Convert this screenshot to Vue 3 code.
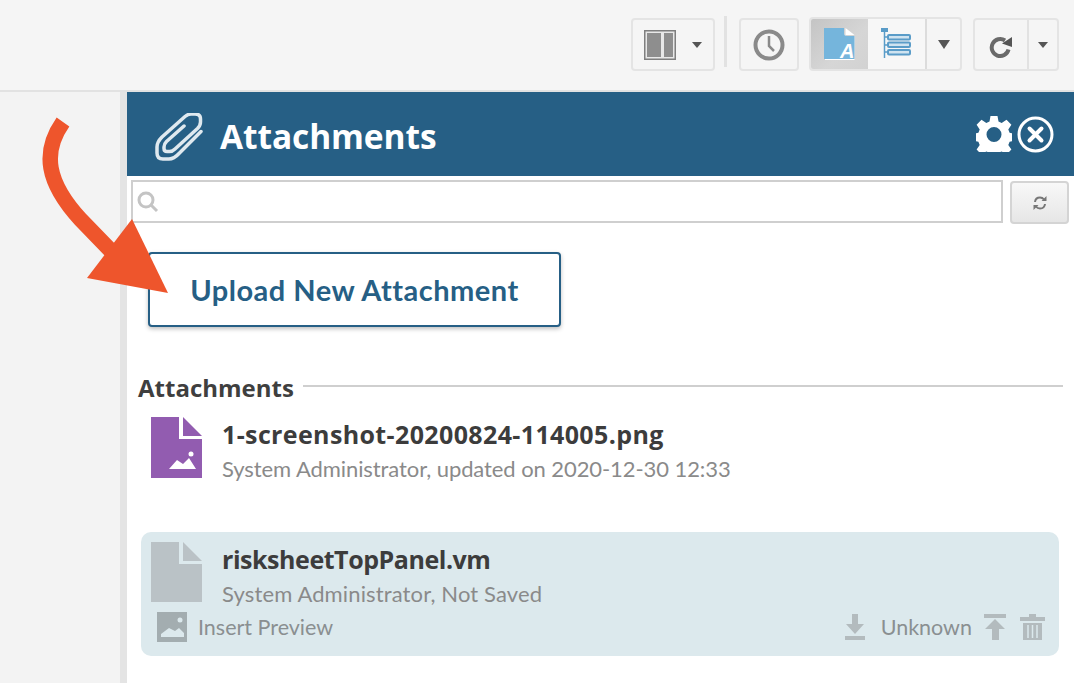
<script setup>
</script>

<template>
  <div class="page">
    <header class="topbar">
      <div class="tgroup g-layout">
        <button class="tbtn b-layout">
          <svg width="32" height="30" viewBox="0 0 32 30"><rect width="32" height="30" fill="#7f7f7f"/><rect x="1.500" y="1.500" width="29" height="27" fill="#e8e8e8"/><path d="M3 3h14v24H3zM20 3h9v24h-9z" fill="#8e8e8e"/></svg>
          <i class="caret"></i>
        </button>
      </div>
      <div class="sep"></div>
      <div class="tgroup g-clock">
        <button class="tbtn b-clock">
          <svg width="32" height="32" viewBox="0 0 32 32"><circle cx="16" cy="16" r="13.500" fill="none" stroke="#8a8a8a" stroke-width="4"/><path d="M16 7v10l5 5" fill="none" stroke="#8a8a8a" stroke-width="2.500"/></svg>
        </button>
      </div>
      <div class="tgroup g-view">
        <button class="tbtn b-active">
          <svg width="31" height="32" viewBox="0 0 31 32"><path d="M0 0h20v5q0 3 3 3h7.500v24H1z" fill="#fff"/><path d="M0 0h20v5q0 3 3 3h7.500v23H0z" fill="#75b5dc"/><path d="M21.500 0l9 7h-9z" fill="#fff"/><text x="16" y="30" class="a-letter">A</text></svg>
        </button>
        <button class="tbtn b-tree">
          <svg width="31" height="32" viewBox="0 0 31 32"><path d="M3.500 2v28M3.500 9h4M3.500 17h4M3.500 24h4" stroke="#5a9cc8" stroke-width="1.500" fill="none"/><rect x="0" y="0" width="7" height="4" fill="#5a9cc8"/><g fill="#cfe3f0" stroke="#5a9cc8" stroke-width="2"><rect x="7" y="7" width="22" height="4.500" rx="1"/><rect x="7" y="14.500" width="22" height="4.500" rx="1"/><rect x="7" y="22" width="22" height="4.500" rx="1"/></g></svg>
        </button>
        <button class="tbtn b-drop"><i class="caret big"></i></button>
      </div>
      <div class="tgroup g-refresh">
        <button class="tbtn b-refresh">
          <svg class="ricon" width="24" height="24" viewBox="0 0 24 24"><path d="M19.500 14.500A8.500 8.500 0 1 1 16 5.500" fill="none" stroke="#6a6a6a" stroke-width="4"/><path d="M13 8.500L23 2v10z" fill="#555"/></svg>
        </button>
        <button class="tbtn b-rdrop"><i class="caret"></i></button>
      </div>
    </header>

    <div class="body">
      <aside class="side"></aside>
      <div class="split"></div>
      <main class="panel">
        <div class="phead">
          <svg class="clip" width="48" height="50" viewBox="0 0 48 50"><path d="M46 18.500L24 40.500Q19 46 14 46H8Q2 46 2 40V34Q2 29 7 24L30 3.500Q33 1 36 1h4q5.500 0 5.500 5v3q0 3.500-3 6.500L20 36q-2.500 2.500-5.500 2.500H12q-3 0-3-3v-1.500q0-3 2.500-5.500L29 13" fill="none" stroke="#dfe9ef" stroke-width="3.500" stroke-linecap="round" stroke-linejoin="round"/></svg>
          <h1>Attachments</h1>
          <div class="hicons">
            <svg width="36" height="36" viewBox="0 0 36 36"><path fill="#fff" fill-rule="evenodd" d="M14.500 0h7l1 5.500 3.200 1.400 4.800-3.100 4.900 5-3.100 4.600 1.300 3.300 5.400 1v7l-5.400 1-1.300 3.200 3.100 4.700-4.900 4.900-4.800-3.100-3.200 1.300-1 5.400h-7l-1-5.400-3.200-1.300-4.800 3.100-4.900-4.900 3.100-4.700-1.300-3.200-5.400-1v-7l5.400-1 1.300-3.300-3.100-4.600 4.900-5 4.800 3.100 3.200-1.400zM18 11a7.500 7.500 0 1 0 0 15 7.500 7.500 0 0 0 0-15z"/></svg>
            <svg width="37" height="37" viewBox="0 0 37 37"><circle cx="18.500" cy="18.500" r="16.500" fill="none" stroke="#fff" stroke-width="3"/><path d="M12.500 12.500l12 12M24.500 12.500l-12 12" stroke="#fff" stroke-width="4" stroke-linecap="round"/></svg>
          </div>
        </div>

        <div class="search-row">
          <div class="search">
            <svg width="24" height="24" viewBox="0 0 24 24"><circle cx="10" cy="10" r="7" fill="none" stroke="#c4c4c4" stroke-width="3"/><path d="M15 15l6 6" stroke="#c4c4c4" stroke-width="3"/></svg>
          </div>
          <button class="refresh">
            <svg width="16" height="16" viewBox="0 0 16 16"><path d="M3 7Q3.500 2.500 8 2.500q2.500 0 4 2M13 9q-.5 4.500-5 4.500-2.500 0-4-2" fill="none" stroke="#777" stroke-width="2"/><path d="M9.500 6h5V1zM6.500 10h-5v5z" fill="#777"/></svg>
          </button>
        </div>

        <button class="upload">Upload New Attachment</button>

        <div class="section">
          <span>Attachments</span>
          <div class="rule"></div>
        </div>

        <div class="file">
          <svg class="doc" width="51" height="61" viewBox="0 0 51 61"><path d="M0 0h28v22h23v39H0z" fill="#925cb0"/><path d="M32 0l19 19H32z" fill="#925cb0"/><circle cx="40" cy="37" r="2.500" fill="#fff"/><path d="M18 52l8-9 6 4 6-6 7 11z" fill="#fff"/></svg>
          <div class="ftext">
            <div class="fname wide">1-screenshot-20200824-114005.png</div>
            <div class="fmeta">System Administrator, updated on 2020-12-30 12:33</div>
          </div>
        </div>

        <div class="card">
          <div class="card-top">
            <svg class="doc" width="51" height="60" viewBox="0 0 51 60"><path d="M0 0h28v22h23v38H0z" fill="#bac2c6"/><path d="M32 0l19 19H32z" fill="#bac2c6"/></svg>
            <div class="ftext">
              <div class="fname tight">risksheetTopPanel.vm</div>
              <div class="fmeta loose">System Administrator, Not Saved</div>
            </div>
          </div>
          <div class="card-bot">
            <svg class="pic" width="30" height="30" viewBox="0 0 30 30"><rect width="30" height="30" fill="#a3adb0"/><circle cx="23" cy="8" r="2.500" fill="#dce9ed"/><path d="M4 25v-3l8-6 6 3 4-3 5 5v4z" fill="#dce9ed"/></svg>
            <span class="ins">Insert Preview</span>
            <span class="grow"></span>
            <svg width="22" height="26" viewBox="0 0 22 26"><path d="M8 0h6v10h6L11 20 2 10h6zM1 22h20v4H1z" fill="#b3bbbe"/></svg>
            <span class="unk">Unknown</span>
            <svg width="22" height="26" viewBox="0 0 22 26"><path d="M0 0h22v4H0zM11 5l10 10h-6v11H8V15H1z" fill="#b3bbbe"/></svg>
            <svg class="trash" width="25" height="26" viewBox="0 0 25 26"><path d="M9 0h7v3h9v4H0V3h9zM3 9h19v17H3z" fill="#b3bbbe"/><path d="M8 11v13M12.500 11v13M17 11v13" stroke="#dce9ed" stroke-width="1.500"/></svg>
          </div>
        </div>
      </main>
    </div>

    <svg class="arrow" width="200" height="320" viewBox="0 0 200 320">
      <path d="M63 122C42 152 46 182 81 220L112 252" fill="none" stroke="#ee552c" stroke-width="15.500"/>
      <path d="M132 219L87 278 168 293z" fill="#ee552c"/>
    </svg>
  </div>
</template>

<style>
html, body { margin: 0; padding: 0; background: #fff; }
</style>

<style scoped>
.page {
  position: relative;
  width: 1074px;
  height: 683px;
  overflow: hidden;
  font-family: "Lato", "Open Sans", sans-serif;
  background: #f4f4f4;
}
button { padding: 0; font: inherit; background: none; }
.topbar {
  height: 92px;
  box-sizing: border-box;
  background: #f5f5f5;
  border-bottom: 2px solid #e2e2e2;
  display: flex;
  align-items: flex-start;
  justify-content: flex-end;
  padding: 17px 15px 0 0;
}
.tgroup {
  display: flex;
  height: 54px;
  box-sizing: border-box;
  border: 2px solid #e4e4e4;
  border-radius: 4px;
  background: #f5f5f5;
  overflow: hidden;
}
.tbtn {
  border: 0;
  display: flex;
  align-items: center;
  justify-content: center;
  height: 100%;
}
.caret {
  display: block;
  width: 0;
  height: 0;
  border: 5px solid transparent;
  border-top: 6px solid #555;
  border-bottom: 0;
}
.caret.big { border-width: 6px; border-top-width: 9px; border-bottom-width: 0; }
.g-layout { width: 84px; margin-right: 9px; margin-top: 1px; height: 53px; }
.b-layout { width: 100%; gap: 16px; padding-right: 1px; }
.sep { width: 3px; height: 51px; background: #e2e2e2; margin-right: 12px; margin-top: -1px; }
.g-clock { width: 60px; margin-right: 10px; margin-top: 1px; height: 53px; }
.b-clock { width: 100%; }
.g-view { width: 153px; margin-right: 11px; }
.b-active { width: 57px; background: linear-gradient(135deg, #c4c4c4, #d6d6d6 60%, #d2d2d2); }
.b-tree { width: 57px; background: #f7f7f7; border-right: 2px solid #dcdcdc; box-sizing: content-box; }
.b-drop { flex: 1; }
.a-letter { font: italic 700 20px "Liberation Sans", sans-serif; fill: #fff; }
.g-refresh { width: 86px; margin-top: 1px; height: 53px; }
.b-refresh { width: 54px; border-right: 2px solid #e2e2e2; }
.ricon { margin-top: 4px; }
.b-rdrop { flex: 1; }

.body { display: flex; height: 591px; }
.side { width: 120px; background: #f3f3f3; }
.split { width: 7px; background: #e4e4e4; }
.panel {
  flex: 1;
  background: #fff;
  min-width: 0;
  display: flex;
  flex-direction: column;
  align-items: flex-start;
}
.phead {
  align-self: stretch;
  height: 84px;
  flex: none;
  background: #265f85;
  display: flex;
  align-items: center;
  padding: 0 20px 0 28px;
  color: #fff;
}
.clip { margin: 8px 17px 0 0; }
.phead h1 {
  margin: 0;
  padding-top: 4px;
  font: 700 33.500px "Open Sans", sans-serif;
  letter-spacing: -0.1px;
}
.hicons { margin-left: auto; display: flex; gap: 5px; align-items: center; }
.search-row {
  align-self: stretch;
  display: flex;
  gap: 7px;
  padding: 4px 5px 0 4px;
}
.search {
  flex: 1;
  height: 43px;
  box-sizing: border-box;
  border: 2px solid #cfcfcf;
  display: flex;
  align-items: center;
  padding-left: 3px;
}
.refresh {
  width: 59px;
  height: 43px;
  margin-top: 1px;
  box-sizing: border-box;
  border: 2px solid #d4d4d4;
  border-radius: 4px;
  background: linear-gradient(#f8f8f8, #e6e6e6);
  display: flex;
  align-items: center;
  justify-content: center;
}
.upload {
  margin: 28px 0 0 21px;
  width: 413px;
  height: 75px;
  box-sizing: border-box;
  background: #fff;
  border: 2px solid #265f85;
  border-radius: 4px;
  box-shadow: 0 2px 4px rgba(0,0,0,.25);
  color: #265f85;
  font-weight: 700;
  font-size: 29px;
  letter-spacing: 0.5px;
}
.section {
  align-self: stretch;
  margin: 44px 11px 0 11px;
  display: flex;
  align-items: center;
  gap: 9px;
  color: #3f3f3f;
  font: 700 24px "Open Sans", sans-serif;
  height: 32px;
}
.rule { flex: 1; height: 2px; background: #cfcfcf; margin-top: -2px; }
.file { display: flex; margin: 14px 0 0 24px; gap: 20px; height: 61px; }
.ftext { display: flex; flex-direction: column; }
.fname {
  font: 700 25px/30px "Open Sans", sans-serif;
  color: #3c3c3c;
  margin-top: 2px;
}
.fname.wide { letter-spacing: 0.37px; }
.fname.tight { letter-spacing: -0.45px; }
.fmeta { font-size: 22px; line-height: 28px; color: #8a8a8a; margin-top: 6px; letter-spacing: -0.08px; }
.fmeta.loose { letter-spacing: 0.13px; margin-top: 6px; }
.card {
  margin: 54px 0 0 14px;
  width: 918px;
  height: 124px;
  box-sizing: border-box;
  background: #dce9ed;
  border-radius: 10px;
  padding: 10px 14px 0 10px;
}
.card-top { display: flex; gap: 20px; height: 60px; margin-bottom: 8px; }
.card-bot { display: flex; align-items: center; height: 34px; color: #8a8f91; font-size: 21.500px; }
.pic { margin-left: 6px; margin-right: 11px; }
.grow { flex: 1; }
.unk { margin: 0 12px 0 15px; }
.trash { margin-left: 14px; }
.arrow { position: absolute; left: 0; top: 0; pointer-events: none; }
</style>
